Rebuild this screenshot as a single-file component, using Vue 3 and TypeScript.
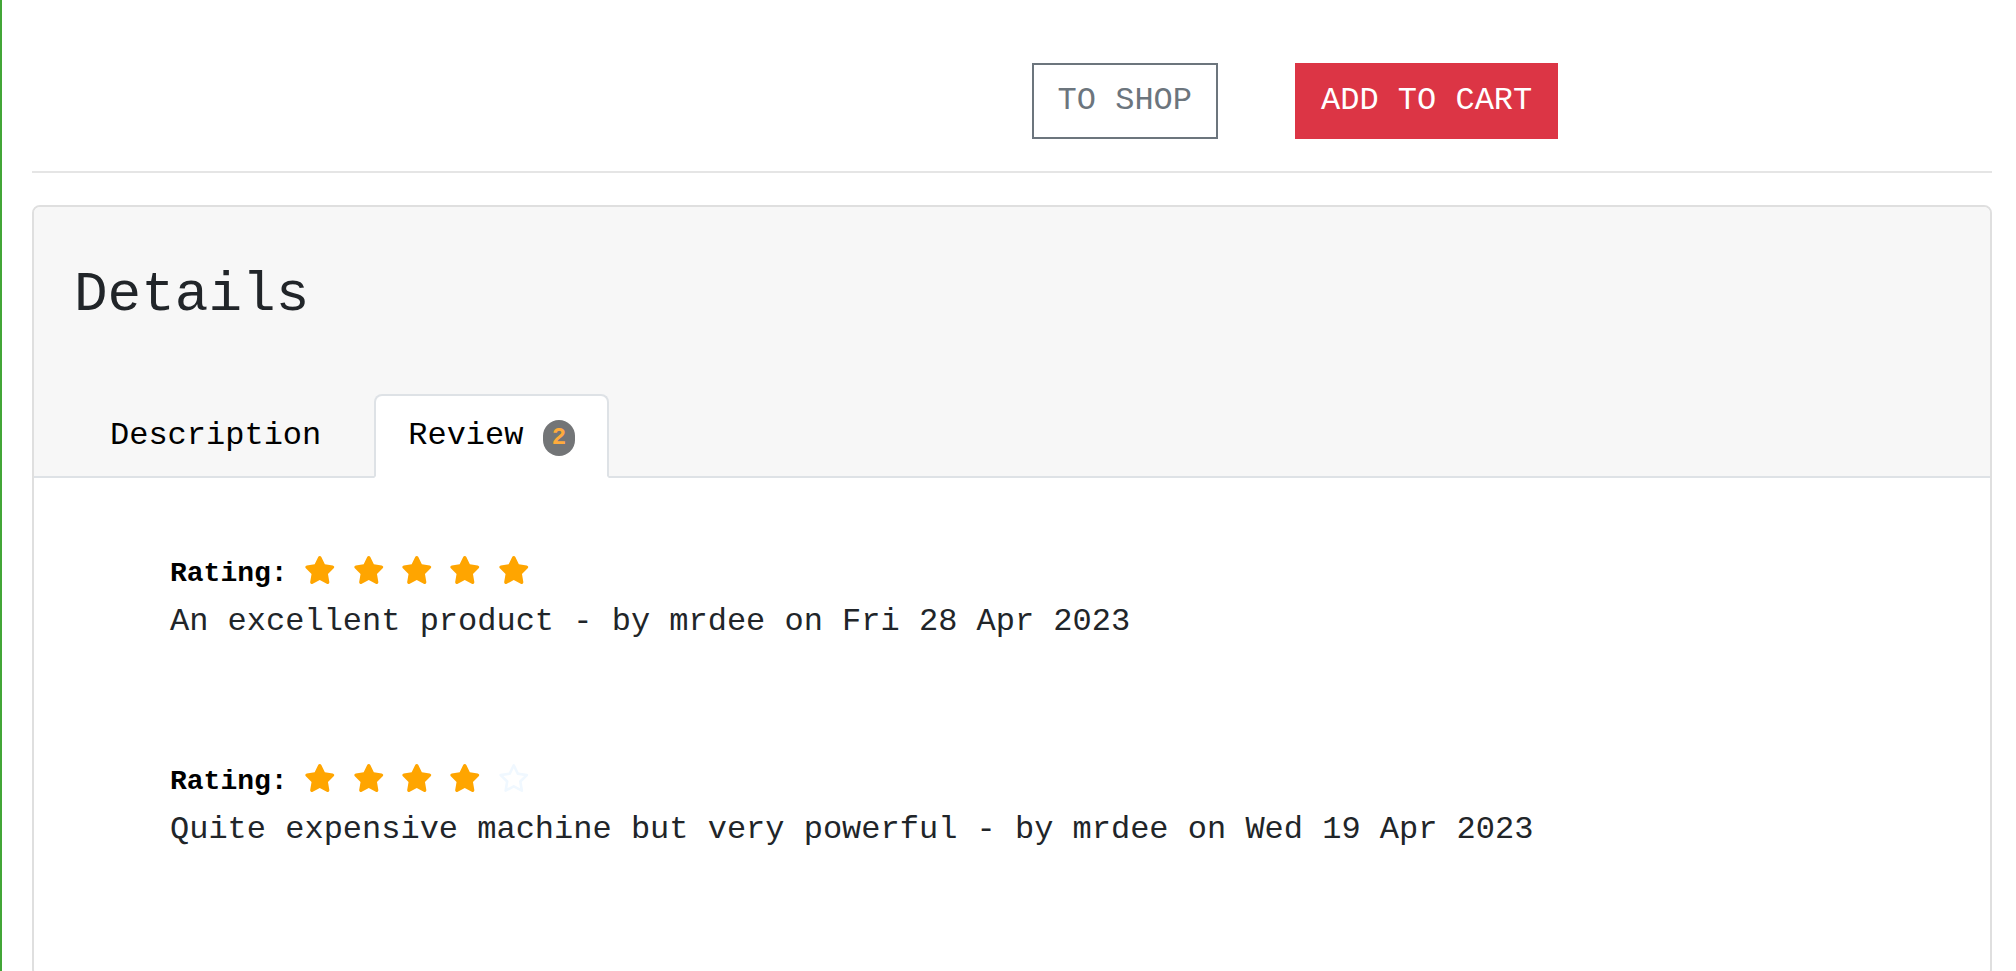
<script setup lang="ts">
interface Review {
  id: number
  rating: number
  comment: string
  author: string
  date: string
}

const reviews: Review[] = [
  { id: 1, rating: 5, comment: 'An excellent product', author: 'mrdee', date: 'Fri 28 Apr 2023' },
  { id: 2, rating: 4, comment: 'Quite expensive machine but very powerful', author: 'mrdee', date: 'Wed 19 Apr 2023' },
]

const solidStar =
  'M316.9 18C311.6 7 300.4 0 288.1 0s-23.4 7-28.8 18L195 150.3 51.4 171.5c-12 1.8-22 10.2-25.7 21.7s-.7 24.2 7.9 32.7L137.8 329 113.2 474.7c-2 12 3 24.2 12.9 31.3s23 8 33.8 2.3l128.3-68.5 128.3 68.5c10.8 5.7 23.9 4.9 33.8-2.3s14.9-19.3 12.9-31.3L438.5 329 542.7 225.9c8.6-8.5 11.7-21.2 7.9-32.7s-13.7-19.9-25.7-21.7L381.2 150.3 316.9 18z'
const outlineStar =
  'M287.9 0c9.2 0 17.6 5.2 21.6 13.5l68.6 141.3 153.2 22.6c9 1.3 16.5 7.6 19.3 16.3s.5 18.1-5.9 24.5L433.6 328.4l26.2 155.6c1.5 9-2.2 18.1-9.7 23.5s-17.3 6-25.3 1.7l-137-73.2L151 509.1c-8.1 4.3-17.9 3.7-25.3-1.7s-11.2-14.5-9.7-23.5l26.2-155.6L31.1 218.2c-6.5-6.4-8.7-15.9-5.9-24.5s10.3-14.9 19.3-16.3l153.2-22.6L266.3 13.5C270.4 5.2 278.7 0 287.9 0zm0 79L235.4 187.2c-3.5 7.1-10.2 12.1-18.1 13.3L99 217.9 184.9 303c5.5 5.5 8.1 13.3 6.8 21L171.4 443.7l105.2-56.2c7.1-3.8 15.6-3.8 22.6 0l105.2 56.2L384.2 324.1c-1.3-7.7 1.2-15.5 6.8-21l85.9-85.1L358.6 200.5c-7.8-1.1-14.6-6.1-18.1-13.3L287.9 79z'
</script>

<template>
  <main class="page">
    <div class="actions">
      <a class="btn btn-outline" href="#shop">TO SHOP</a>
      <button class="btn btn-danger" type="button">ADD TO CART</button>
    </div>
    <hr class="divider" />
    <section class="card">
      <header class="card-header">
        <h2 class="title">Details</h2>
        <ul class="tabs">
          <li><a class="tab" href="#description">Description</a></li>
          <li>
            <a class="tab active" href="#review" aria-current="true">Review <span class="badge">{{ reviews.length }}</span></a>
          </li>
        </ul>
      </header>
      <div class="card-body">
        <article v-for="review in reviews" :key="review.id" class="review">
          <div class="rating">
            <strong class="label">Rating:</strong>
            <template v-for="n in 5" :key="n">
              {{ ' ' }}<svg
                class="star"
                :class="{ empty: n > review.rating }"
                viewBox="0 0 576 512"
                aria-hidden="true"
              >
                <path :d="n > review.rating ? outlineStar : solidStar" />
              </svg>
            </template>
          </div>
          <p class="comment">{{ review.comment }} - by {{ review.author }} on {{ review.date }}</p>
        </article>
      </div>
    </section>
  </main>
</template>

<style>
body {
  margin: 0;
  background: #fff;
}
</style>

<style scoped>
.page {
  box-sizing: border-box;
  min-height: 100vh;
  padding: 63px 24px 0 30px;
  border-left: 2px solid #43a637;
  color: #212529;
  font-family: "Liberation Mono", "Courier New", monospace;
  font-size: 32px;
  line-height: 48px;
}

.actions {
  display: flex;
  gap: 77px;
  padding-left: 51%;
}

.btn {
  padding: 12px 24px;
  border: 2px solid;
  border-radius: 0;
  font: inherit;
  text-decoration: none;
  white-space: nowrap;
  cursor: pointer;
}

.btn-outline {
  border-color: #6c757d;
  color: #6c757d;
}

.btn-danger {
  border-color: #dc3545;
  background: #dc3545;
  color: #fff;
}

.divider {
  margin: 32px 0;
  border: 0;
  border-top: 2px solid #e5e5e5;
}

.card {
  border: 2px solid #dfdfdf;
  border-radius: 8px;
  background: #fff;
}

.card-header {
  padding-top: 55px;
  border-radius: 6px 6px 0 0;
  background: linear-gradient(#dee2e6, #dee2e6) bottom / 100% 2px no-repeat #f7f7f7;
}

.title {
  margin: 0 0 65px;
  padding: 0 40px;
  font-size: 56px;
  font-weight: 400;
  line-height: 67px;
}

.tabs {
  display: flex;
  gap: 19px;
  margin: 0;
  padding: 0 42px;
  list-style: none;
}

.tab {
  display: block;
  padding: 16px 32px;
  border: 2px solid transparent;
  border-radius: 8px 8px 0 0;
  color: #000;
  text-decoration: none;
}

.tab.active {
  border-color: #dee2e6 #dee2e6 #fff;
  background: #fff;
}

.badge {
  display: inline-block;
  padding: 6px 9px;
  border-radius: 16px;
  background: #737577;
  color: #ffab3c;
  font-size: 24px;
  font-weight: 700;
  line-height: 24px;
}

.card-body {
  padding: 72px 136px 10px;
}

.review {
  margin-bottom: 112px;
}

.rating {
  height: 48px;
  font-size: 28px;
}

.label {
  color: #000;
}

.star {
  height: 28px;
  vertical-align: -3px;
  fill: #ffa500;
}

.star.empty {
  fill: #f0f8ff;
}

.comment {
  margin: 0;
}
</style>
